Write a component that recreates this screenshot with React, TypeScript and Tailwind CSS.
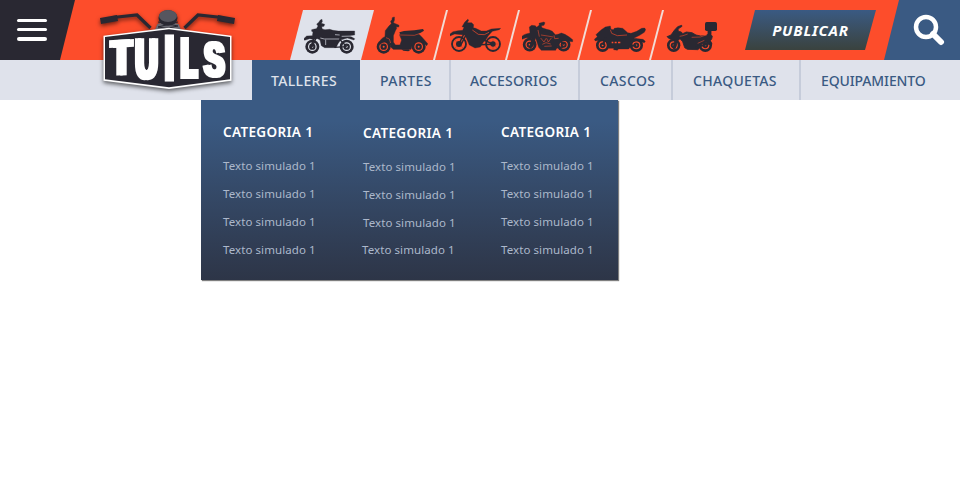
import React from "react";

const INK = "#292832";
const RED = "#fd4d2b";

function Wheel({ x, y, r = 18, bg = RED }: { x: number; y: number; r?: number; bg?: string }) {
  return (
    <g stroke="none">
      <circle cx={x} cy={y} r={r + 3} fill={INK} />
      <circle cx={x} cy={y} r={r - 5} fill={bg} />
      <circle cx={x} cy={y} r={r - 8.5} fill={INK} />
      <circle cx={x} cy={y} r={3} fill={bg} />
    </g>
  );
}

function Classic() {
  const bg = "#dfe2eb";
  return (
    <svg viewBox="57 54 156 111" className="h-[37px] w-[52px]" fill={INK}>
      <Wheel x={82} y={140} bg={bg} />
      <Wheel x={185} y={140} bg={bg} />
      <path d="M106 60l5-2 1 7-3 5 10 3-2 6-7 1 2 7 8 2 14-1 10 3 16 2h49v12l-14 3 14 8-2 4-20-6-20 6-8 11-6 12h-34l-10-6-4-17-7-4-9 1-9 28-4-2 7-25-9-2-15 5-4-4 10-9 17-1 2-11-4-2V89l8-2 6-1 5-8-4-6 5-4z" stroke={INK} strokeWidth="1" />
      <path d="M106 114l12 3h45M122 119v16M150 104l14 1M170 109l38-1" stroke={bg} strokeWidth="2" fill="none" />
      <path d="M163 117l22 23M148 142l35-2M94 112l-12 28" stroke={INK} strokeWidth="4" />
    </svg>
  );
}

function Scooter() {
  return (
    <svg viewBox="273 48 156 117" className="h-[39px] w-[52px]" fill={INK}>
      <Wheel x={296} y={140} />
      <Wheel x={401} y={140} />
      <path d="M322 53l6-2v10l-3 7 6 3 11 5-1 5-8-1 2 5-4 7-6 15v19l6 9h14l5-15-6-15 2-4 43-1 13 3 9 9 17 19-3 6-14-13c-15-4-27 2-31 17l-2 7h-53l-8-7-3-11c-7-7-20-6-28 3l-3-5c3-9 9-15 17-18l1-18 11-14 7-7-2-7 4-5z" stroke={INK} strokeWidth="1.5" />
      <path d="M343 97l14-4 31-2 26-4 3 5-11 7-17 8h-42z" />
      <path d="M345 105l43 1 18-6M303 113l10 4 4 12" stroke={RED} strokeWidth="1.6" fill="none" />
      <path d="M349 148h22l4 3-5 3-15-2z" />
    </svg>
  );
}

function Enduro() {
  return (
    <svg viewBox="60 54 156 105" className="h-[35px] w-[52px]" fill={INK}>
      <g fill="none" stroke={INK}>
        <circle cx="87" cy="132" r="21" strokeWidth="5.500" />
        <circle cx="189" cy="132" r="21" strokeWidth="5.500" />
        <path d="M112 80L87 132M118 85l-24 47M158 119l31 13M148 134l40-1" strokeWidth="4.500" />
        <path d="M73 118l28 28M73 146l28-28M189 113v38M170 132h38M176 118l26 28" strokeWidth="1.2" opacity=".5" />
      </g>
      <circle cx="87" cy="132" r="9" />
      <circle cx="189" cy="132" r="8" />
      <path d="M113 58l3 2-4 8h13l6 6-1 9 7 2 17 8h15l15-6 28-2-4 4-21 5-12 13-8 13-7 7-9 14-16 3-17-9-10-23-4-7-8-1-22-2-14 6-1-5 10-8 15-3 14-1 4-9-6-2 8-13z" stroke={INK} strokeWidth="1" />
      <path d="M127 90l18 13 18 1 14-7" stroke={RED} strokeWidth="2" fill="none" />
    </svg>
  );
}

function Cruiser() {
  return (
    <svg viewBox="276 63 156 96" className="h-[32px] w-[52px]" fill={INK}>
      <Wheel x={299} y={134} r={17.5} />
      <Wheel x={401} y={134} r={17.5} />
      <path d="M341 66l4 2-3 8-8 1 2 6 14 5 9 2 8 4 9 10 8-1 10-4 11 4 13 8 10 8v6l-14-1c-15-4-29 3-33 18l-4 9h-43l-8-9-9-28-6 22-9 10-5-3 9-28-17-2-14 5-3-4c5-8 11-11 19-13l9-2-2-18 7-5 11 1 4 5 8-7-1-5z" stroke={INK} strokeWidth="1" />
      <g fill="none" stroke={RED} strokeWidth="1.6">
        <path d="M324 90l4 20M333 105l20 3 17 3M332 114l10 12 6-11M350 115l5 11 9-12M337 133l11-5 14 4M343 139l22-1M372 106l2 10 12-1" />
      </g>
      <path d="M357 145l42-4M384 118l19 15" stroke={INK} strokeWidth="5" />
    </svg>
  );
}

function Sport() {
  return (
    <svg viewBox="57 72 156 87" className="h-[29px] w-[52px]" fill={INK}>
      <Wheel x={83} y={136} r={17} />
      <Wheel x={184} y={136} r={17} />
      <path d="M68 99l11-10 12-8 15-3 2 10 7 1 3-4 11-2 14 2 15 13 10 2 17-6 15-9 9-1 3 5-4 8-14 9-18 9 28 3 7 6-3 4-21-5c-13 0-20 7-21 17l-5 7h-31l-3 4-11-2v-4h-15l-4-13c-4-9-11-14-20-12l-16 3-3-5 9-8-4-6z" stroke={INK} strokeWidth="1" />
      <path d="M106 89l4 11 17 7 29-2" fill="none" stroke={RED} strokeWidth="1.8" />
      <path d="M110 125h5v5h-5zM119 125h6v5h-6zM129 125h7v5h-7z" fill={RED} />
      <path d="M92 112l-8 23M160 139l24-3" stroke={INK} strokeWidth="6" />
    </svg>
  );
}

function Touring() {
  return (
    <svg viewBox="273 63 156 96" className="h-[32px] w-[52px]" fill={INK}>
      <Wheel x={296} y={136} r={17} />
      <Wheel x={391} y={136} r={17} />
      <rect x="390" y="66" width="36" height="27" rx="5" />
      <path d="M298 91l10-11 12-4 1 3-12 8 1 7 9 2 4 5 11-5 17 2 12 7 14 3 14-1 8-4v-10h9v11l4 5-2 8-4 5 5 10-3 4-13-8c-13 0-20 7-23 18l-4 3-31-1-8-5-6-18-8-9-7 6-8 25-6-2 6-25-15-3-6-4-3-3 12-5z" stroke={INK} strokeWidth="2.500" />
      <path d="M314 109l10-2 14-5M350 112l26-1 20-7M368 130l20-9" fill="none" stroke={RED} strokeWidth="1.6" />
      <path d="M361 143l44-13" stroke={INK} strokeWidth="5" />
    </svg>
  );
}

// x, y, w, h: drawn box of the letter; b: its left and right edge in the font, in em; s: outline; d: sideways thickening
const letters = [
  { c: "T", x: 109.3, y: 40.2, w: 24.2, h: 35.8, b: [0.021, 0.589], k: -0.04, s: 1.6, d: "[filter:drop-shadow(4px_0_0_#fff)]", dx: 4 },
  { c: "U", x: 135.3, y: 37.3, w: 22.4, h: 42.7, b: [0.072, 0.645], k: 0, s: 1.8, d: "[filter:drop-shadow(3px_0_0_#fff)]", dx: 3 },
  { c: "I", x: 165, y: 34.3, w: 9.2, h: 47.2, b: [0.069, 0.213], k: 0, s: 1, d: "", dx: 0 },
  { c: "L", x: 180.6, y: 36.3, w: 18.4, h: 42.5, b: [0.077, 0.575], k: 0, s: 1.8, d: "[filter:drop-shadow(3.5px_0_0_#fff)]", dx: 3.5 },
  { c: "S", x: 203, y: 38.8, w: 22.4, h: 38.5, b: [0.036, 0.621], k: 0.03, s: 1.8, d: "[filter:drop-shadow(3px_0_0_#fff)]", dx: 3 },
];

function Logo() {
  return (
    <svg viewBox="94 4 148 94" className="absolute top-[4px] left-[94px] h-[94px] w-[148px] drop-shadow-[0_2px_2px_rgba(0,0,0,0.6)]">
      <g fill="none" stroke={INK}>
        <path d="M113 17.500l24-2.500 13.500 13M222 17.500l-24-2.500-13.500 13" strokeWidth="3.200" />
        <path d="M100.500 21l17-3M234.500 21l-17-3" strokeWidth="6" />
      </g>
      <path d="M157.500 24q10-4 21 0l3 7h-27z" fill="#686871" />
      <path d="M158 22l20 4-19 4M178 22l-20 5 20 3" stroke={INK} fill="none" />
      <ellipse cx="168" cy="18" rx="9.500" ry="7.700" fill={INK} />
      <ellipse cx="168" cy="16" rx="9" ry="6" fill="#56565f" />
      <path d="M103.500 35.700L169 27.700l62.500 8v45L169 89l-65.500-8.300z" fill="#fff" />
      <path d="M105 37L169 29.300 230 37v42.300l-61 8-64-8z" fill={INK} />
      {letters.map((l) => {
        const cap = (l.c === "S" ? 0.74 : l.c === "U" ? 0.7 : 0.69) * 50;
        const sx = (l.w - l.s - l.dx) / ((l.b[1] - l.b[0]) * 50);
        const stroke = l.s / sx;
        const sy = l.h / (cap + stroke);
        const base = l.y + l.h - (stroke * sy) / 2 - (l.c === "S" || l.c === "U" ? 0.01 * 50 * sy : 0);
        return (
          <g key={l.c} className={l.d}>
            <g transform={`translate(${l.x + l.s / 2 - l.b[0] * 50 * sx} ${base}) scale(${sx} ${sy}) skewY(${l.k * 57})`}>
              <text fontSize="50" fontWeight="700" fontFamily="'Liberation Sans', sans-serif" fill="#fff" stroke="#fff" strokeWidth={stroke}>
                {l.c}
              </text>
            </g>
          </g>
        );
      })}
    </svg>
  );
}

const bikes = [
  { Icon: Scooter, cls: "pl-[14px] pt-[6px]" },
  { Icon: Enduro, cls: "pl-[16px] pt-[8px]" },
  { Icon: Cruiser, cls: "pl-[16px] pt-[11px]" },
  { Icon: Sport, cls: "pl-[16px] pt-[14px]" },
  { Icon: Touring, cls: "pl-[16px] pt-[11px]" },
];

const nav = [
  { t: "TALLERES", cls: "w-[108px] pl-[19px] bg-[#3a5a83] text-[#dfe2eb] tracking-[0.35px]" },
  { t: "PARTES", cls: "w-[91px] pl-[20px] border-r-2 border-[#c6ccda] tracking-[0.45px]" },
  { t: "ACCESORIOS", cls: "w-[129px] pl-[19px] border-r-2 border-[#c6ccda] tracking-[0.2px]" },
  { t: "CASCOS", cls: "w-[93px] pl-[20px] border-r-2 border-[#c6ccda] tracking-[0.4px]" },
  { t: "CHAQUETAS", cls: "w-[128px] pl-[20px] border-r-2 border-[#c6ccda] tracking-[0.3px]" },
  { t: "EQUIPAMIENTO", cls: "w-[159px] pl-[20px] tracking-[-0.12px]" },
];

const columns = ["ml-[22px] pt-[22px] w-[140px]", "pt-[23px] w-[138px]", "pt-[22px] w-[110px]"];

export default function App() {
  return (
    <div className="relative h-[500px] w-[960px] overflow-hidden bg-white font-['Noto_Sans',sans-serif]">
      <header className="flex h-[60px] bg-[#fd4d2b]">
        <button className="flex h-[60px] w-[75px] flex-col gap-[6px] bg-[#292832] pt-[19px] pl-[17px] [clip-path:polygon(0_0,100%_0,60px_100%,0_100%)]">
          <span className="h-[3px] w-[30px] rounded-full bg-white" />
          <span className="h-[3px] w-[30px] rounded-full bg-white" />
          <span className="h-[4px] w-[30px] rounded-full bg-white" />
        </button>
        <div className="ml-[215px] flex pt-[10px]">
          <div className="h-[50px] w-[84px] bg-[#dfe2eb] pt-[8px] pl-[14px] [clip-path:polygon(13px_0,100%_0,71px_100%,0_100%)]">
            <Classic />
          </div>
          {bikes.map(({ Icon, cls }, i) => (
            <div key={i} className={`relative -ml-[12px] h-[50px] w-[84px] ${cls}`}>
              <Icon />
              {i < 4 && <span className="absolute top-0 right-[-2px] h-[50px] w-[15px] bg-[#f2dcd6] [clip-path:polygon(13px_0,100%_0,2px_100%,0_100%)]" />}
            </div>
          ))}
        </div>
        <button className="mt-[10px] ml-[11px] flex h-[40px] w-[131px] items-center justify-center bg-linear-to-b from-[#3a5a83] to-[#3a423e] text-[15px] font-bold tracking-[0.8px] text-white italic [clip-path:polygon(10px_0,100%_0,120px_100%,0_100%)]">
          PUBLICAR
        </button>
        <button className="ml-auto flex h-[60px] w-[76px] items-start bg-[#3a5a83] pt-[14px] pl-[29px] [clip-path:polygon(15px_0,100%_0,100%_100%,0_100%)]">
          <svg viewBox="0 0 32 32" className="h-[32px] w-[32px]" fill="none" stroke="#fff">
            <circle cx="13" cy="13" r="10" strokeWidth="4.500" />
            <path d="M20 20l8 8" strokeWidth="6" strokeLinecap="round" />
          </svg>
        </button>
      </header>
      <nav className="flex h-[40px] bg-[#dfe2eb] pl-[252px] text-[14px] font-medium text-[#3a5a83]">
        {nav.map((n) => (
          <a key={n.t} className={`h-[40px] shrink-0 leading-[42px] whitespace-nowrap ${n.cls}`}>
            {n.t}
          </a>
        ))}
      </nav>
      <section className="ml-[201px] flex h-[180px] w-[417px] bg-linear-to-b from-[#3a5a83] from-12% to-[#2d3547] shadow-[1px_1px_1px_rgba(0,0,0,0.5)]">
        {columns.map((cls, c) => (
          <div key={c} className={`shrink-0 whitespace-nowrap ${cls}`}>
            <h3 className="text-[13.500px] leading-[20px] font-semibold tracking-[0.35px] text-white">CATEGORIA 1</h3>
            <ul className="mt-[10px] text-[11.500px] tracking-[0.08px] text-[#acb8cb]">
              {[0, 1, 2, 3].map((r) => (
                <li key={r} className={c === 1 && r === 3 ? "-mt-px -ml-px h-[28px] leading-[28px]" : "h-[28px] leading-[28px]"}>
                  Texto simulado 1
                </li>
              ))}
            </ul>
          </div>
        ))}
      </section>
      <Logo />
    </div>
  );
}
